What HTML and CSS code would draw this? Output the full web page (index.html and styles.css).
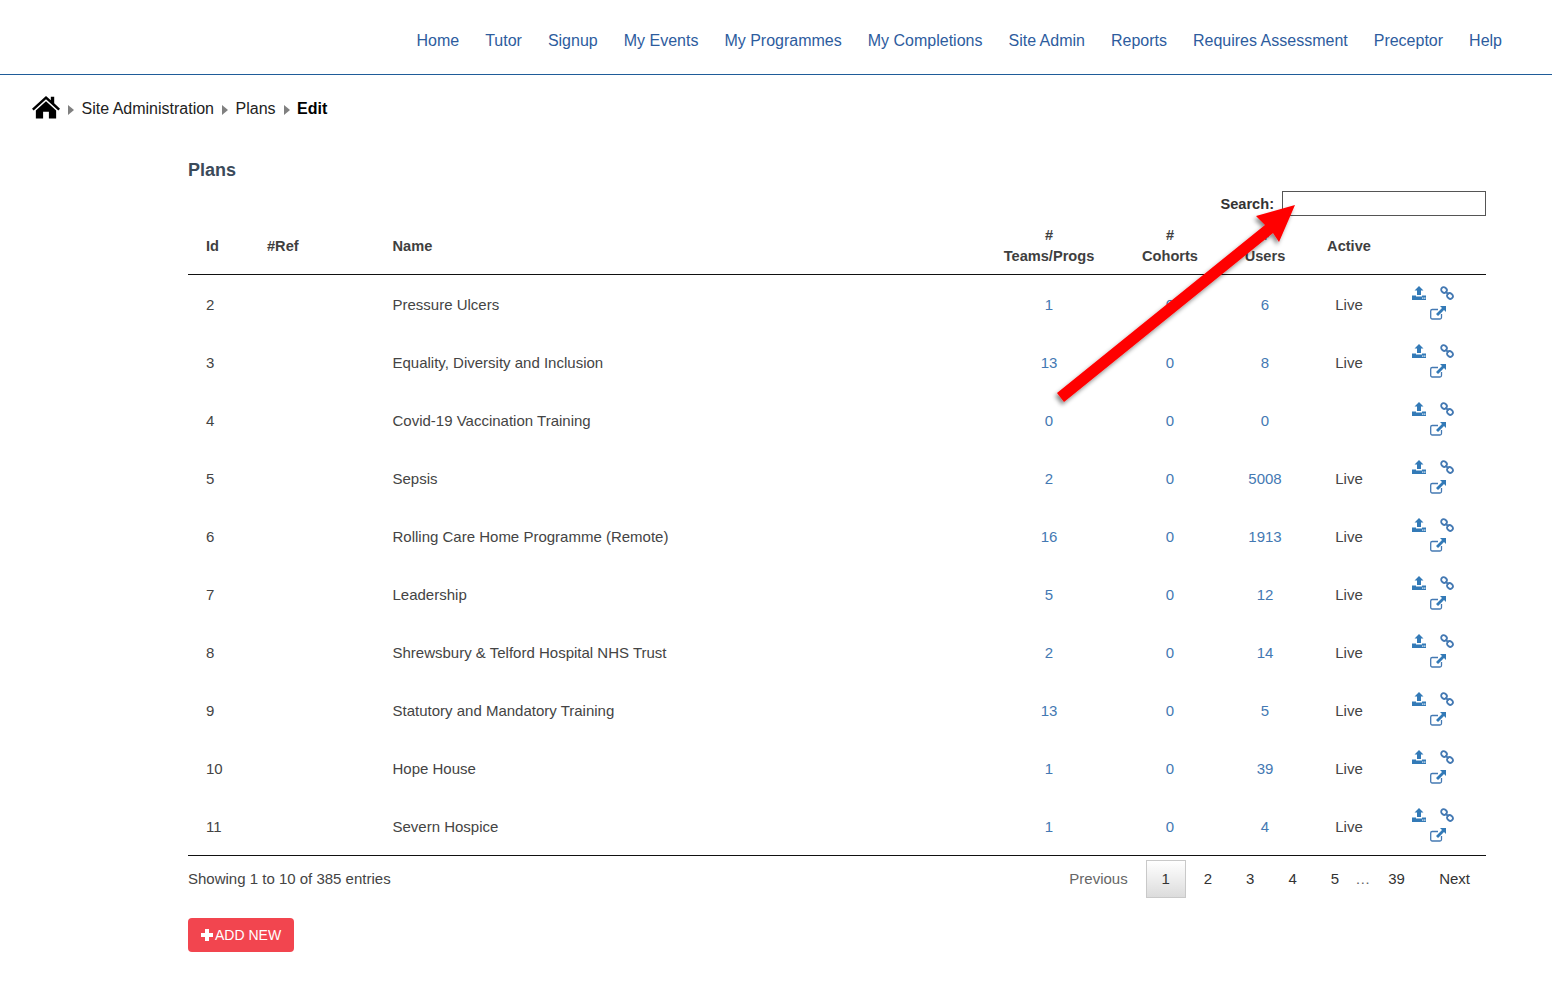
FILE: index.html
```html
<!DOCTYPE html>
<html lang="en">
<head>
    <meta charset="UTF-8">
    <title>Plans</title>
    <link rel="stylesheet" href="styles.css">
</head>
<body>
    <svg class="icon-defs" width="0" height="0">
        <symbol id="i-upload" viewBox="0 0 14 14">
            <path d="M7 0 L11.500 4.500 H9 V9 H5 V4.500 H2.500 Z"/>
            <path fill-rule="evenodd" d="M0 9.500 H4 V10.500 H10 V9.500 H14 V14 H0 Z M10.200 11.600 V12.800 H11.400 V11.600 Z M12.200 11.600 V12.800 H13.400 V11.600 Z"/>
        </symbol>
        <symbol id="i-link" viewBox="0 0 14 14">
            <g fill="none" stroke="currentColor" stroke-width="1.800">
                <ellipse cx="4" cy="4" rx="3" ry="2.600" transform="rotate(40 4 4)"/>
                <ellipse cx="10" cy="10" rx="3" ry="2.600" transform="rotate(40 10 10)"/>
                <path d="M5.500 5.500 L8.500 8.500"/>
            </g>
        </symbol>
        <symbol id="i-external" viewBox="0 0 16 14">
            <path fill="none" stroke="currentColor" stroke-width="1.300" d="M11.500 8 V11.500 a1.500 1.500 0 0 1 -1.500 1.500 H2.200 a1.500 1.500 0 0 1 -1.500 -1.500 V5 a1.500 1.500 0 0 1 1.500 -1.500 H8"/>
            <path d="M10 0 H16 V6 L14 4 L8 10 L6 8 L12 2 Z"/>
        </symbol>
    </svg>

    <header class="topbar">
        <nav class="topnav">
            <a href="#">Home</a>
            <a href="#">Tutor</a>
            <a href="#">Signup</a>
            <a href="#">My Events</a>
            <a href="#">My Programmes</a>
            <a href="#">My Completions</a>
            <a href="#">Site Admin</a>
            <a href="#">Reports</a>
            <a href="#">Requires Assessment</a>
            <a href="#">Preceptor</a>
            <a href="#">Help</a>
        </nav>
    </header>

    <div class="breadcrumb">
        <a href="#" class="crumb-home" aria-label="Home">
            <svg width="28" height="24" viewBox="0 0 29 24">
                <path d="M14.500 0.500 L19.500 5 V1.500 H23 V8.200 L29 13.700 L27.300 15.600 L14.500 3.900 L1.700 15.600 L0 13.700 Z"/>
                <path d="M14.500 6 L25 15.500 V24 H17.500 V17 H11.500 V24 H4 V15.500 Z"/>
            </svg>
        </a>
        <span class="crumb-sep"></span>
        <a href="#">Site Administration</a>
        <span class="crumb-sep"></span>
        <a href="#">Plans</a>
        <span class="crumb-sep"></span>
        <b>Edit</b>
    </div>

    <main class="content">
        <h2>Plans</h2>
        <div class="search-row">
            <label for="search">Search:</label>
            <input type="text" id="search">
        </div>

        <table class="plans">
            <thead>
                <tr>
                    <th class="col-id">Id</th>
                    <th class="col-ref">#Ref</th>
                    <th class="col-name">Name</th>
                    <th class="col-teams num">#<br>Teams/Progs</th>
                    <th class="col-cohorts num">#<br>Cohorts</th>
                    <th class="col-users num">#<br>Users</th>
                    <th class="col-active num">Active</th>
                    <th class="col-actions"></th>
                </tr>
            </thead>
            <tbody id="rows"></tbody>
        </table>

        <div class="table-foot">
            <div class="foot-info">Showing 1 to 10 of 385 entries</div>
            <div class="pager">
                <a href="#" class="page-prev">Previous</a>
                <a href="#" class="page current">1</a>
                <a href="#" class="page">2</a>
                <a href="#" class="page">3</a>
                <a href="#" class="page">4</a>
                <a href="#" class="page">5</a>
                <span class="dots">…</span>
                <a href="#" class="page">39</a>
                <a href="#" class="page-next">Next</a>
            </div>
        </div>

        <a href="#" class="add-new"><span class="plus"></span>ADD NEW</a>
    </main>

    <svg class="arrow" width="270" height="230" viewBox="1045 190 270 230">
        <defs>
            <filter id="arrow-shadow" x="-10%" y="-10%" width="125%" height="125%">
                <feDropShadow dx="-2" dy="3" stdDeviation="2" flood-color="#000" flood-opacity="0.45"/>
            </filter>
        </defs>
        <polygon filter="url(#arrow-shadow)" fill="#ff0000" points="1295,205 1279,242 1273,233 1064,402 1057,393 1265,225 1256,216"/>
    </svg>

    <script>
        // Plan rows: id, name, teams, cohorts, users, active
        const plans = [
            [2, "Pressure Ulcers", 1, 0, 6, "Live"],
            [3, "Equality, Diversity and Inclusion", 13, 0, 8, "Live"],
            [4, "Covid-19 Vaccination Training", 0, 0, 0, ""],
            [5, "Sepsis", 2, 0, 5008, "Live"],
            [6, "Rolling Care Home Programme (Remote)", 16, 0, 1913, "Live"],
            [7, "Leadership", 5, 0, 12, "Live"],
            [8, "Shrewsbury & Telford Hospital NHS Trust", 2, 0, 14, "Live"],
            [9, "Statutory and Mandatory Training", 13, 0, 5, "Live"],
            [10, "Hope House", 1, 0, 39, "Live"],
            [11, "Severn Hospice", 1, 0, 4, "Live"]
        ];

        const rows = document.getElementById("rows");
        plans.forEach(function (p) {
            const tr = document.createElement("tr");
            tr.innerHTML =
                "<td>" + p[0] + "</td><td></td>" +
                "<td>" + p[1].replace("&", "&amp;") + "</td>" +
                '<td class="num"><a href="#">' + p[2] + "</a></td>" +
                '<td class="num"><a href="#">' + p[3] + "</a></td>" +
                '<td class="num"><a href="#">' + p[4] + "</a></td>" +
                '<td class="num">' + p[5] + "</td>" +
                '<td class="actions"><div class="action-icons">' +
                '<a href="#"><svg class="i-up"><use href="#i-upload"/></svg></a>' +
                '<a href="#"><svg class="i-link"><use href="#i-link"/></svg></a>' +
                '<a href="#"><svg class="i-ext"><use href="#i-external"/></svg></a>' +
                "</div></td>";
            rows.appendChild(tr);
        });
    </script>
</body>
</html>
```

FILE: styles.css
```css
body {
    margin: 0;
    font-family: "Liberation Sans", Arial, sans-serif;
    font-size: 15px;
    color: #444;
    background: #fff;
}

a {
    text-decoration: none;
}

.icon-defs {
    display: block;
    height: 0;
}

/* Top navigation */
.topbar {
    height: 74px;
    border-bottom: 1px solid #1f5c99;
    display: flex;
    justify-content: flex-end;
    align-items: center;
    padding-right: 50px;
}

.topnav {
    display: flex;
    gap: 26px;
    font-size: 16px;
    margin-top: 8px;
}

.topnav a {
    color: #2d5c9e;
}

/* Breadcrumb */
.breadcrumb {
    display: flex;
    align-items: center;
    height: 24px;
    margin-top: 22px;
    padding-left: 32px;
    font-size: 16px;
    color: #000;
}

.breadcrumb a {
    color: #222;
}

.breadcrumb b {
    color: #000;
}

.crumb-home {
    display: flex;
    margin-top: -4px;
}

.crumb-sep {
    width: 0;
    height: 0;
    margin: 2px 7.500px 0 8px;
    border-left: 6px solid #808080;
    border-top: 5px solid transparent;
    border-bottom: 5px solid transparent;
}

/* Main content */
.content {
    margin: 0 66px 0 188px;
}

h2 {
    margin: 0;
    padding-top: 38px;
    font-size: 18px;
    line-height: 22px;
    font-weight: bold;
    color: #3b4a5a;
}

.search-row {
    display: flex;
    justify-content: flex-end;
    align-items: center;
    gap: 8px;
    margin-top: 10px;
    height: 25px;
    font-size: 14.600px;
    font-weight: bold;
    color: #333;
}

.search-row input {
    width: 204px;
    height: 25px;
    box-sizing: border-box;
    border: 1px solid #555;
    padding: 0 4px;
    outline: none;
}

/* Table */
.plans {
    width: 1298px;
    table-layout: fixed;
    border-collapse: collapse;
}

.plans th {
    height: 58px;
    padding: 3px 18px 0;
    font-size: 14.600px;
    line-height: 21px;
    font-weight: bold;
    color: #3f3f3f;
    text-align: left;
    border-bottom: 1px solid #111;
    box-sizing: border-box;
}

.plans td {
    height: 58px;
    padding: 2px 18px 0;
    box-sizing: border-box;
}

.plans th.num,
.plans td.num {
    text-align: center;
    padding-left: 0;
    padding-right: 0;
}

.plans td a {
    color: #4479b3;
}

.col-id { width: 61px; }
.col-ref { width: 125.500px; }
.col-name { width: 610.500px; }
.col-teams { width: 128px; }
.col-cohorts { width: 114px; }
.col-users { width: 76px; }
.col-active { width: 92px; }

.plans td.actions {
    padding: 0 0 0 15px;
}

.action-icons {
    width: 46px;
    display: flex;
    flex-wrap: wrap;
    justify-content: center;
    row-gap: 6px;
}

.action-icons a {
    display: flex;
    color: #337ab7;
}

.action-icons svg {
    fill: #337ab7;
}

.i-up {
    width: 14px;
    height: 14px;
    margin-right: 14px;
    margin-left: -3px;
}

.i-link {
    width: 14px;
    height: 14px;
    margin-right: -3px;
}

.i-ext {
    width: 16px;
    height: 14px;
    margin-left: 10px;
}

/* Footer of the table */
.table-foot {
    display: flex;
    justify-content: space-between;
    align-items: flex-start;
    height: 38px;
    margin-top: 1px;
    padding-top: 4px;
    border-top: 1px solid #111;
}

.foot-info,
.page-prev,
.page-next,
.dots {
    padding-top: 10px;
}

.pager {
    display: flex;
    align-items: flex-start;
    padding-right: 16px;
}

.pager a {
    color: #333;
}

.pager .page-prev {
    color: #666;
    margin-right: 18px;
}

.pager .page {
    min-width: 14px;
    padding: 0 12px;
    text-align: center;
    height: 36px;
    line-height: 36px;
    border: 1px solid transparent;
    margin-right: 2.300px;
}

.pager .current {
    background: linear-gradient(to bottom, #fff, #dcdcdc);
    border-color: #c9c9c9;
}

.dots {
    color: #666;
    margin: 0 5px 0 -2px;
}

.pager .page-next {
    margin-left: 19px;
}

.add-new {
    display: inline-flex;
    align-items: center;
    gap: 2px;
    height: 34px;
    margin-top: 20px;
    padding: 0 13px;
    background: #f2454f;
    border-radius: 4px;
    color: #fff;
    font-size: 14px;
}

.plus {
    position: relative;
    width: 12px;
    height: 12px;
}

.plus::before,
.plus::after {
    content: "";
    position: absolute;
    background: #fff;
}

.plus::before {
    left: 0;
    right: 0;
    top: 4px;
    height: 4px;
}

.plus::after {
    top: 0;
    bottom: 0;
    left: 4px;
    width: 4px;
}

/* Annotation arrow drawn over the page */
.arrow {
    position: absolute;
    left: 1045px;
    top: 190px;
    pointer-events: none;
}
```
